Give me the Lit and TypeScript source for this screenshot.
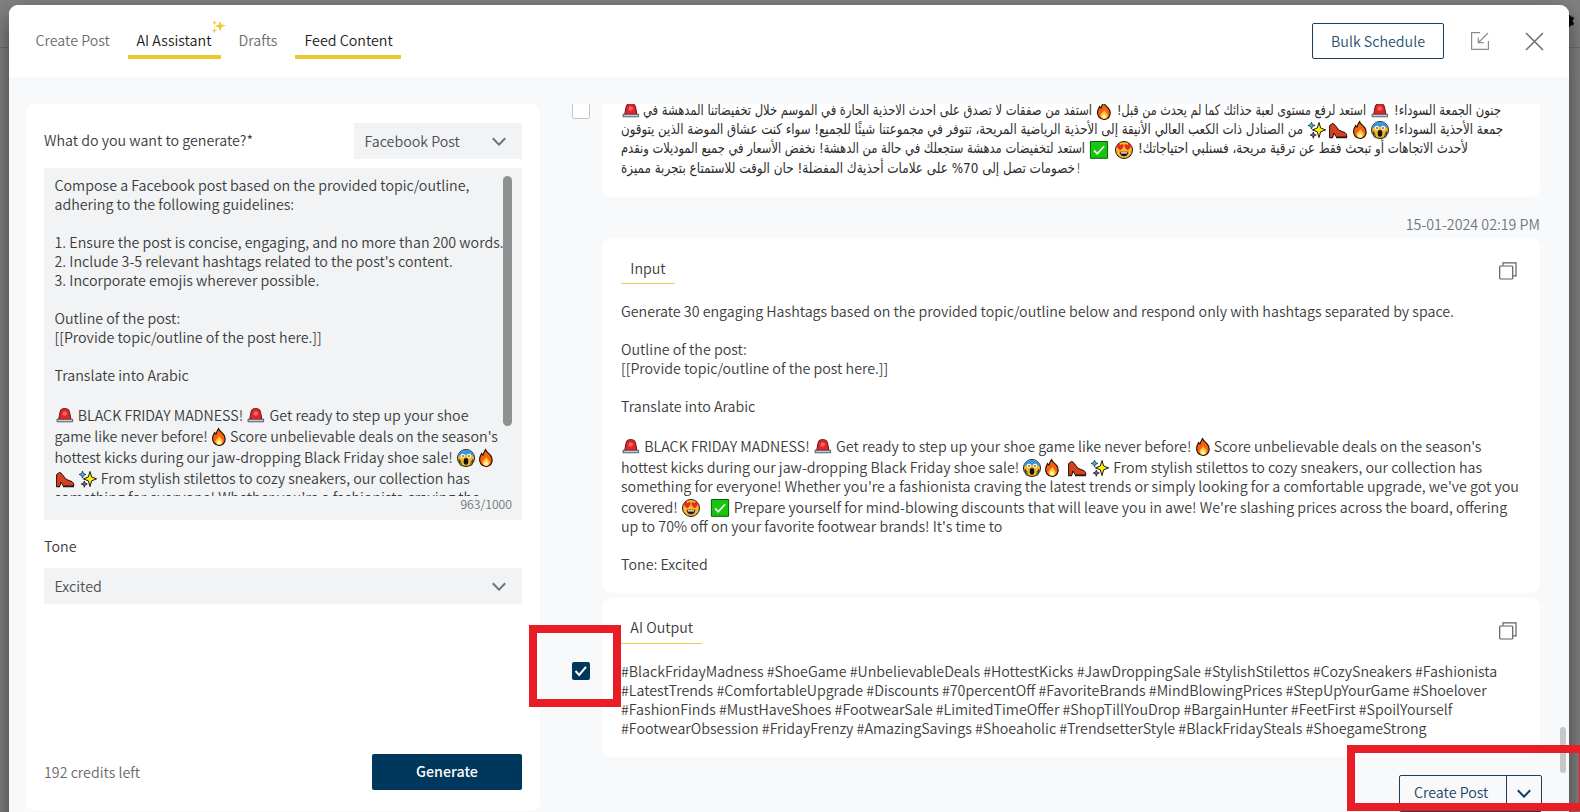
import { LitElement, html, svg, css } from "lit";
import { customElement, property } from "lit/decorators.js";

const GLYPHS: Record<string, unknown> = {
  "🚨": svg`<path d="M3.600 14 5 6.200Q5.400 3 8 2.700h3.400q2.700.3 3.200 3.500L16 14z" fill="#e0262c" stroke="#6b1218" stroke-width="1"/><circle cx="9.800" cy="7.600" r="2.200" fill="#ff6a5e"/><path d="M2 13.200h15.600v2.600H2z" fill="#c9c9cf" stroke="#3d3a40" stroke-width=".8"/>`,
  "🔥": svg`<path d="M9.600 1.600c.3 2.600 4.400 3.800 6 7.600 1.700 4.600-.8 9.200-5.400 9.200S2.900 14.600 3.700 10.200c.3-1.800 1.300-3 1.800-4.600l1.500 1.500C7.800 5 8.100 3.200 9.600 1.600z" fill="#f7630c" stroke="#1a0a00" stroke-width="1.100"/><path d="M10.200 9c1 2 3.500 3.200 3.500 5.700 0 2-1.500 3.200-3.500 3.200s-3.700-1.300-3.700-3.300C6.500 12.300 9.600 11.400 10.200 9z" fill="#ffc83d"/><path d="M10 12.800c.6 1 1.900 1.700 1.900 3 0 1-.9 1.600-1.900 1.600s-1.800-.7-1.800-1.600c0-1.300 1.300-2 1.800-3z" fill="#fff3c4"/>`,
  "😱": svg`<circle cx="10" cy="10" r="8.500" fill="#f2b92d" stroke="#1a1a1a" stroke-width="1"/><path d="M2.200 8a8 8 0 0 1 15.600 0Q10 5 2.200 8z" fill="#3a96dd"/><circle cx="6.800" cy="7.800" r="2.100" fill="#fff"/><circle cx="13.200" cy="7.800" r="2.100" fill="#fff"/><circle cx="7" cy="8" r=".8"/><circle cx="13" cy="8" r=".8"/><ellipse cx="10" cy="13.400" rx="2.300" ry="3.300" fill="#16100c"/><path d="M3.200 11.500q1.600.5 2.200 6l-1.500-.8zM16.800 11.500q-1.600.5-2.200 6l1.500-.8z" fill="#f7d67a" stroke="#1a1a1a" stroke-width=".8"/>`,
  "👠": svg`<path d="M1.600 5.600 4.400 3.400q1.800.2 3 2.200l3 4q1.400 1.200 3.800 2l2.800 1q2 1.300 1.900 4.400H8.400L5.800 13l-1 4.500H1.600z" fill="#d3421f" stroke="#2b0b04" stroke-width="1"/><path d="M1.400 17.600h3.600M8 17.600h11" stroke="#1a1a1a" stroke-width="1.200"/>`,
  "✨": svg`<path d="M12 2.500 13.600 8l5 1.900-5 1.900L12 17.600l-1.700-5.800-4.900-1.900L10.300 8z" fill="#fff100" stroke="#1a1a1a" stroke-width="1"/><path d="m4.500 2 .9 2.600L8 5.500l-2.600.9-.9 2.700-.9-2.700L1 5.500l2.600-.9z" fill="#46c3dc" stroke="#14343c" stroke-width=".8"/><path d="m6.300 12 .8 2.200 2.200.8-2.200.9-.8 2.400-.8-2.400-2.300-.9 2.300-.8z" fill="#8f5a8c" stroke="#241524" stroke-width=".8"/>`,
  "😍": svg`<circle cx="10" cy="10" r="8.500" fill="#ffb52e" stroke="#1a1a1a" stroke-width="1"/><path d="M6.200 10.200C1.500 6.800 3 3.700 4.600 3.700q1.400 0 1.900 1.500.8-1.300 2.200-.9c1.500.6 1.200 3.600-2.500 5.900zM13.800 10.200c4.700-3.400 3.200-6.500 1.600-6.500q-1.400 0-1.900 1.500-.8-1.300-2.200-.9c-1.500.6-1.200 3.600 2.500 5.900z" fill="#e52b1f"/><path d="M5.600 11.700h8.800q-.6 4.500-4.400 4.500t-4.400-4.500z" fill="#221512"/><path d="M6.600 12.200h6.800l-.4 1.300H7z" fill="#fff"/>`,
  "✅": svg`<path d="M1.400 1.500h17.200v16.800H1.400z" fill="#16c60c" stroke="#0b5a10" stroke-width="1"/><path d="m5 10.400 3.300 3.300 6.800-7.500" fill="none" stroke="#f2f2f2" stroke-width="1.700"/>`,
};

const glyphCss = css`
  .emo { width: 20px; height: 20px; vertical-align: -5px; display: inline-block; flex: none; }
  .line .fire { margin: 0 -2px; }
  .line .scream { margin-right: 2px; }
`;

const emoji = (c: string) => html`<svg class="emo ${c === "🔥" ? "fire" : c === "😱" ? "scream" : ""}" viewBox="0 0 20 20" role="img" aria-label=${c}>${GLYPHS[c]}</svg>`;
const EMOJI = /(🚨|🔥|😱|👠|✨|😍|✅)/u;
const rich = (t: string) => t.split(EMOJI).map((p) => (GLYPHS[p] ? emoji(p) : p));

@customElement("text-lines")
class TextLines extends LitElement {
  @property({ attribute: false }) lines: string[] = [];
  static styles = [glyphCss, css`
    :host { display: block; }
    .line { height: 19px; line-height: 19px; white-space: pre; }
    .tall { height: 19px; padding-top: 2px; }
  `];
  render() {
    return this.lines.map((l) => html`<div class="line ${EMOJI.test(l) ? "tall" : ""}">${rich(l)}</div>`);
  }
}

type Seg = { t: string; w: number; gap?: number };

@customElement("arabic-lines")
class ArabicLines extends LitElement {
  @property({ attribute: false }) rows: Seg[][] = [];
  static styles = [glyphCss, css`
    :host { display: block; }
    .row { display: flex; height: 19.300px; align-items: center; }
    .seg { height: 26px; flex: none; overflow: visible; }
    text { font: 14.500px "DejaVu Sans", sans-serif; fill: #2c2c2c; }
  `];
  render() {
    return this.rows.map((r) => html`<div class="row">${r.map((s) =>
      GLYPHS[s.t]
        ? html`<span style="margin-left:${s.gap ?? 0}px">${emoji(s.t)}</span>`
        : html`<svg class="seg" style="width:${s.w}px;margin-left:${s.gap ?? 0}px">
            <text direction="rtl" text-anchor="start" x=${s.w} y="17.300" textLength=${s.w} lengthAdjust="spacingAndGlyphs">${s.t}</text></svg>`
    )}</div>`);
  }
}

const chevron = html`<svg class="chev" width="14" height="9" viewBox="0 0 14 9"><path d="M.8 1.200 7 7.600l6.200-6.400" fill="none" stroke="currentColor" stroke-width="2"/></svg>`;
const copy = html`<svg class="copy" width="18" height="18" viewBox="0 0 18 18" fill="none" stroke="#5c5f63" stroke-width="1.200"><rect x=".7" y="4" width="13" height="13" rx=".8"/><path d="M4 3.600V.8h13v13h-2.800"/></svg>`;

const PROMPT = [
  "Compose a Facebook post based on the provided topic/outline,",
  "adhering to the following guidelines:",
  "",
  "1. Ensure the post is concise, engaging, and no more than 200 words.",
  "2. Include 3-5 relevant hashtags related to the post's content.",
  "3. Incorporate emojis wherever possible.",
  "",
  "Outline of the post:",
  "[[Provide topic/outline of the post here.]]",
  "",
  "Translate into Arabic",
  "",
  "🚨 BLACK FRIDAY MADNESS! 🚨 Get ready to step up your shoe",
  "game like never before! 🔥 Score unbelievable deals on the season's",
  "hottest kicks during our jaw-dropping Black Friday shoe sale! 😱🔥",
  "👠 ✨ From stylish stilettos to cozy sneakers, our collection has",
  "something for everyone! Whether you're a fashionista craving the",
];

const INPUT = [
  "Generate 30 engaging Hashtags based on the provided topic/outline below and respond only with hashtags separated by space.",
  "",
  "Outline of the post:",
  "[[Provide topic/outline of the post here.]]",
  "",
  "Translate into Arabic",
  "",
  "🚨 BLACK FRIDAY MADNESS! 🚨 Get ready to step up your shoe game like never before! 🔥 Score unbelievable deals on the season's",
  "hottest kicks during our jaw-dropping Black Friday shoe sale! 😱🔥  👠 ✨ From stylish stilettos to cozy sneakers, our collection has",
  "something for everyone! Whether you're a fashionista craving the latest trends or simply looking for a comfortable upgrade, we've got you",
  "covered! 😍   ✅ Prepare yourself for mind-blowing discounts that will leave you in awe! We're slashing prices across the board, offering",
  "up to 70% off on your favorite footwear brands! It's time to",
  "",
  "Tone: Excited",
];

const OUTPUT = [
  "#BlackFridayMadness #ShoeGame #UnbelievableDeals #HottestKicks #JawDroppingSale #StylishStilettos #CozySneakers #Fashionista",
  "#LatestTrends #ComfortableUpgrade #Discounts #70percentOff #FavoriteBrands #MindBlowingPrices #StepUpYourGame #Shoelover",
  "#FashionFinds #MustHaveShoes #FootwearSale #LimitedTimeOffer #ShopTillYouDrop #BargainHunter #FeetFirst #SpoilYourself",
  "#FootwearObsession #FridayFrenzy #AmazingSavings #Shoeaholic #TrendsetterStyle #BlackFridaySteals #ShoegameStrong",
];

const ARABIC: Seg[][] = [
  [
    { t: "🚨", w: 20 },
    { t: "استفد من صفقات لا تصدق على أحدث الأحذية الحارة في الموسم خلال تخفيضاتنا المدهشة في", w: 449, gap: 2 },
    { t: "🔥", w: 20, gap: 2 },
    { t: "استعد لرفع مستوى لعبة حذائك كما لم يحدث من قبل!", w: 249, gap: 3 },
    { t: "🚨", w: 20, gap: 4 },
    { t: "جنون الجمعة السوداء!", w: 107, gap: 4 },
  ],
  [
    { t: "من الصنادل ذات الكعب العالي الأنيقة إلى الأحذية الرياضية المريحة، تتوفر في مجموعتنا شيئًا للجميع! سواء كنت عشاق الموضة الذين يتوقون", w: 682 },
    { t: "✨", w: 20, gap: 4 },
    { t: "👠", w: 20, gap: 1 },
    { t: "🔥", w: 20, gap: 2 },
    { t: "😱", w: 20, gap: 0 },
    { t: "جمعة الأحذية السوداء!", w: 109, gap: 4 },
  ],
  [
    { t: "استعد لتخفيضات مدهشة ستجعلك في حالة من الدهشة! نخفض الأسعار في جميع الموديلات ونقدم", w: 464 },
    { t: "✅", w: 20, gap: 4 },
    { t: "😍", w: 20, gap: 5 },
    { t: "لأحدث الاتجاهات أو تبحث فقط عن ترقية مريحة، فسنلبي احتياجاتك!", w: 330, gap: 4 },
  ],
  [
    { t: "خصومات تصل إلى 70% على علامات أحذيةك المفضلة! حان الوقت للاستمتاع بتجربة مميزة", w: 454 },
    { t: "!", w: 3, gap: 2 },
  ],
];

@customElement("app-root")
class AppRoot extends LitElement {
  static styles = css`
    * { box-sizing: border-box; }
    :host {
      display: block; position: relative; width: 1580px; height: 812px; overflow: hidden;
      background: #808080; color: #3b3b3b;
      font: 350 14.260px/19px "Noto Sans CJK SC", "Noto Sans", sans-serif;
    }
    .rule { position: absolute; left: 0; right: 0; top: 47px; height: 1px; background: #6d6d6d; }
    .gear { position: absolute; left: 1562px; top: 14px; }
    .modal {
      position: relative; margin: 0 11px 0 9px; top: 5px; height: 820px; border-radius: 9px 9px 0 0;
      background: #f7f9fb; overflow: hidden; display: flex; flex-direction: column;
    }
    .shade { position: absolute; left: 9px; right: 11px; top: 5px; height: 830px; border-radius: 9px; box-shadow: 0 10px 22px rgba(0,0,0,.5); }
    header { height: 72px; flex: none; background: #fff; display: flex; align-items: flex-start; padding: 18px 25px 0 18px; }
    nav { display: flex; flex: 1; }
    .tab { height: 36px; padding: 7px 8.500px 0; color: #6e6e6e; border-bottom: 4px solid transparent; white-space: nowrap; position: relative; }
    .tab.on { color: #1c1c1c; border-color: #ecc932; }
    .t1 { width: 101px; } .t2 { width: 93px; } .t3 { width: 57px; margin: 0 8px 0 9px; } .t4 { width: 106px; padding-left: 9.500px; margin-left: 0; }
    .spark { position: absolute; left: 83px; top: -3px; }
    .bulk { width: 132px; height: 36px; border: 1px solid #1c3f5c; border-radius: 2px; color: #28506d; text-align: center; line-height: 34px; background: #fff; }
    .min { margin: 9px 0 0 27px; } .close { margin: 9px 0 0 36px; }
    main { display: flex; padding: 27px 0 0 17px; }
    .side { width: 514px; height: 707px; background: #fff; border-radius: 9px; padding: 19px 18px 21px; display: flex; flex-direction: column; }
    .ask { display: flex; justify-content: space-between; align-items: center; height: 36px; }
    .ask > span { margin-top: -3px; }
    .select { background: #f1f3f5; height: 36px; display: flex; align-items: center; justify-content: space-between; padding: 0 16px 2px 10.500px; color: #4c4e51; }
    .select .chev { margin-top: 2px; }
    .kind { width: 168px; }
    .chev { color: #6f7276; }
    .area { margin-top: 9px; height: 352px; background: #f1f3f5; padding: 0 10px 0 10.500px; display: flex; flex-direction: column; }
    .scroll { height: 328px; overflow: hidden; padding-top: 7.500px; display: flex; justify-content: space-between; }
    .scroll text-lines { width: 448px; margin-top: -1px; }
    .thumb { width: 9px; height: 250px; border-radius: 5px; background: #8f9190; flex: none; }
    .count { font-size: 12.200px; color: #707274; text-align: right; line-height: 16px; }
    .tone { margin: 16px 0 13px 0; height: 19px; }
    .foot { margin-top: auto; display: flex; justify-content: space-between; align-items: center; color: #6a6a6a; }
    .foot span { margin-top: -2px; }
    .gen { width: 150px; height: 36px; border-radius: 2px; background: #00375c; color: #fff; font-weight: 500; text-align: center; line-height: 34px; }
    .feed { display: grid; grid-template-columns: 62px 938px; align-content: start; width: 1010px; height: 708px; overflow: hidden; }
    .pick { padding-left: 32px; }
    .box { width: 18px; height: 18px; border: 1px solid #c3c6c9; border-radius: 2px; background: #fff; margin-top: -3px; }
    .box.on { background: #00375c; border: 0; margin-top: 64px; display: flex; align-items: center; justify-content: center; }
    .card { background: #fff; border-radius: 9px; padding: 0 19px; }
    .first { height: 93px; border-radius: 0 0 9px 9px; padding-top: 0; }
    .first arabic-lines { display: block; margin-top: -3px; }
    .time { grid-column: 2; text-align: right; color: #737679; height: 41px; padding-top: 17px; }
    .in { grid-column: 2; height: 355px; margin-bottom: 5px; padding-top: 20px; }
    .out { height: 159px; padding-top: 20px; }
    .top { display: flex; justify-content: space-between; padding-right: 4.500px; height: 26px; }
    .cap { border-bottom: 1px solid #e6cd4c; padding: 0 9.300px; height: 26px; line-height: 20px; }
    .out .cap { line-height: 18px; }
    .copy { margin-top: 4px; }
    .in text-lines { margin-top: 16.500px; }
    .out text-lines { margin-top: 17px; }
    .actions { grid-column: 2; display: flex; justify-content: flex-end; padding-top: 18px; margin-right: -2px; color: #1d4361; }
    .split { display: flex; width: 143px; height: 37px; border: 1px solid #1c3f5c; border-radius: 2px; line-height: 32px; }
    .split .l { flex: 1; padding-left: 14px; } .split .r { width: 35px; border-left: 1px solid #1c3f5c; padding-left: 10px; }
    .split .chev { color: #0e3a5b; }
    .red1 { position: absolute; left: 529px; top: 625px; width: 92px; height: 82px; border: 8px solid #e91d25; }
    .red2 { position: absolute; left: 1347px; top: 745px; width: 240px; height: 66px; border: 8px solid #e91d25; }
    .bar { position: absolute; left: 1560px; top: 727px; width: 6px; height: 46px; border-radius: 3px; background: #c6c7c8; }
  `;
  render() {
    return html`
      <div class="rule"></div>
      <svg class="gear" width="13" height="14" viewBox="0 0 13 14"><path d="M0 1h8l1 2 2-.5 1 2.500-1.500 1.500v1L12 9l-1 2.500-2-.5-1 2H0z" fill="#050505"/></svg>
      <div class="shade"></div>
      <div class="modal">
        <header>
          <nav>
            <div class="tab t1">Create Post</div>
            <div class="tab t2 on">AI Assistant
              <svg class="spark" width="16" height="14" viewBox="0 0 16 14" fill="#ecc932"><path d="M9 0.500 10.300 4.500 15 5.300 10.600 7 9.300 11.500 7.600 7.300 3.500 6.500 7.800 4.600z"/><path d="m3.500.5.7 1.800 1.800.5-1.800.7-.7 2-.6-2-1.900-.7 1.900-.5zM3.400 8l.7 1.900 1.900.6-1.900.8-.7 2-.7-2-2-.8 2-.6z"/></svg>
            </div>
            <div class="tab t3">Drafts</div>
            <div class="tab t4 on">Feed Content</div>
          </nav>
          <div class="bulk">Bulk Schedule</div>
          <svg class="min" width="18" height="18" viewBox="0 0 18 18" fill="none" stroke="#8a8c8f" stroke-width="1.200"><path d="M9 .6H.6v16.800h16.800V9M17 1 7.500 10.500M7.300 5.500v5.200h5.400"/></svg>
          <svg class="close" width="19" height="19" viewBox="0 0 19 19" stroke="#6f7173" stroke-width="1.600"><path d="m1 1 17 17M18 1 1 18"/></svg>
        </header>
        <main>
          <section class="side">
            <div class="ask"><span>What do you want to generate?*</span><div class="select kind">Facebook Post${chevron}</div></div>
            <div class="area">
              <div class="scroll"><text-lines .lines=${PROMPT}></text-lines><div class="thumb"></div></div>
              <div class="count">963/1000</div>
            </div>
            <div class="tone">Tone</div>
            <div class="select">Excited${chevron}</div>
            <div class="foot"><span>192 credits left</span><div class="gen">Generate</div></div>
          </section>
          <section class="feed">
            <div class="pick"><div class="box"></div></div>
            <div class="card first"><arabic-lines .rows=${ARABIC}></arabic-lines></div>
            <div class="time">15-01-2024 02:19 PM</div>
            <div class="card in">
              <div class="top"><div class="cap">Input</div>${copy}</div>
              <text-lines .lines=${INPUT}></text-lines>
            </div>
            <div class="pick"><div class="box on"><svg width="14" height="12" viewBox="0 0 14 12"><path d="m1.500 6 3.700 3.900L12 1.800" fill="none" stroke="#fff" stroke-width="2"/></svg></div></div>
            <div class="card out">
              <div class="top"><div class="cap">AI Output</div>${copy}</div>
              <text-lines .lines=${OUTPUT}></text-lines>
            </div>
            <div class="actions"><div class="split"><div class="l">Create Post</div><div class="r">${chevron}</div></div></div>
          </section>
        </main>
      </div>
      <div class="bar"></div>
      <div class="red1"></div>
      <div class="red2"></div>
    `;
  }
}
